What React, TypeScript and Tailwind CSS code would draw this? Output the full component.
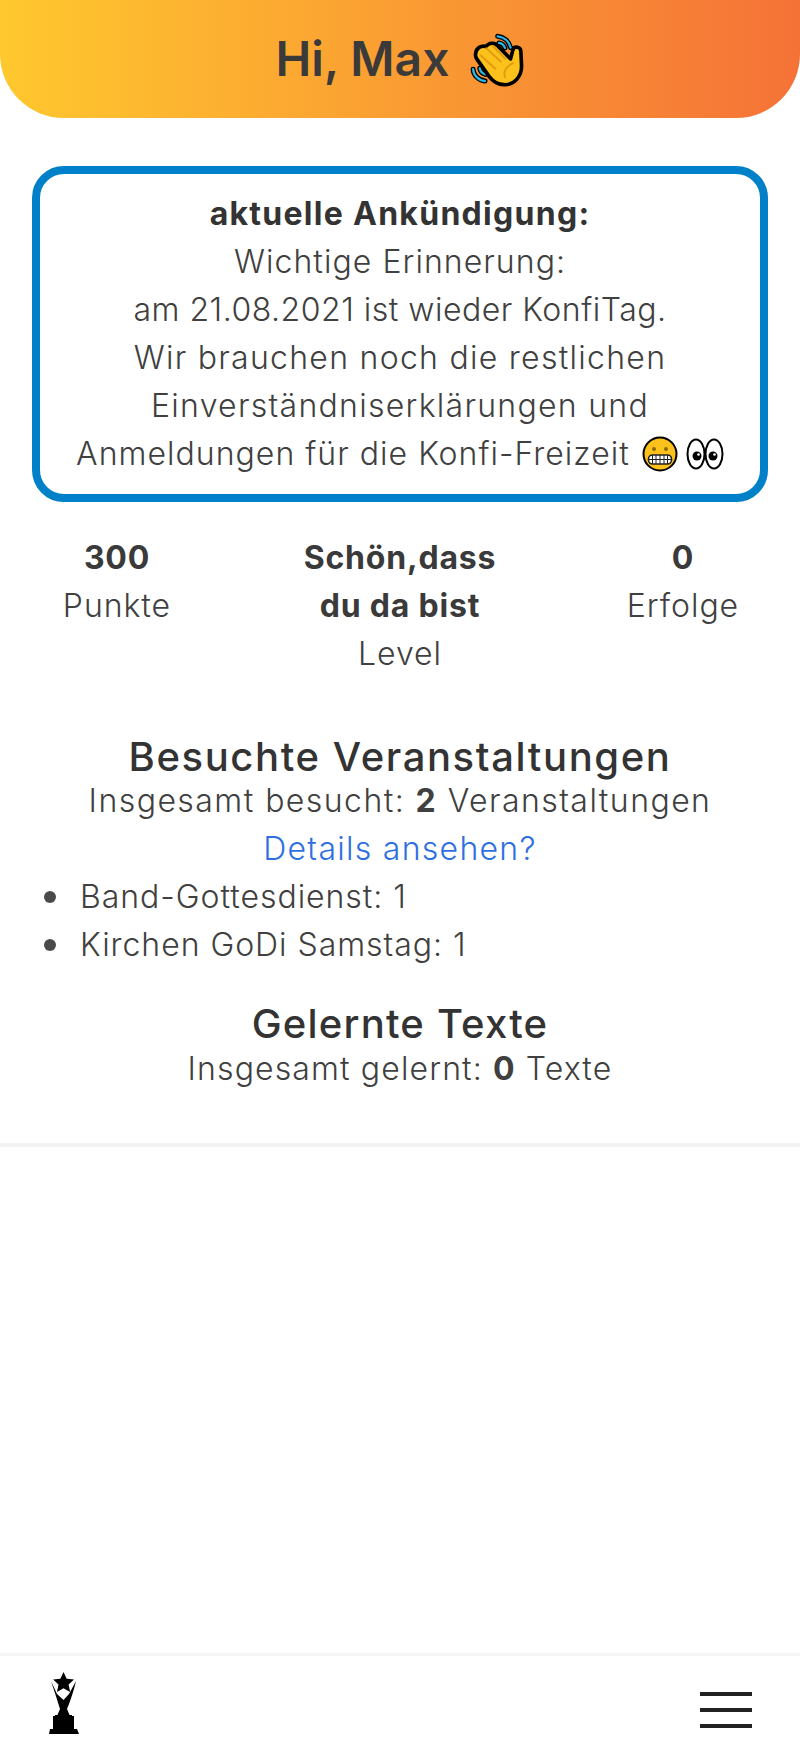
const font = "font-['Inter','Noto_Sans',sans-serif]";

function WaveEmoji() {
  return (
    <svg viewBox="80 28 165 172" className="h-[57px] w-[55px]" fill="none">
      <g strokeLinecap="round">
        <path d="M166 44c18 2 34 14 39 34M170 64c8 1 15 7 18 15" stroke="#000" strokeWidth="15" />
        <path d="M92 143c0 18 16 34 36 36M112 140c1 9 8 16 17 19" stroke="#000" strokeWidth="15" />
        <path d="M166 44c18 2 34 14 39 34M170 64c8 1 15 7 18 15" stroke="#29b6e8" strokeWidth="7" />
        <path d="M92 143c0 18 16 34 36 36M112 140c1 9 8 16 17 19" stroke="#29b6e8" strokeWidth="7" />
      </g>
      <path
        d="M100 95c0-15 18-25 30-20 10-13 28-13 35-3l40 40 7-27c4-13 24-10 24 5l2 40c2 35-23 62-53 60-20 0-35-12-45-25l-35-50c-5-7-7-15-5-20z"
        fill="#fcc21b"
        stroke="#000"
        strokeWidth="11"
        strokeLinejoin="round"
      />
      <path d="M132 80l43 40M115 102l44 40M152 74l38 38M212 125c-16 8-30 22-24 42" stroke="#e29c10" strokeWidth="6" strokeLinecap="round" />
    </svg>
  );
}

function GrimaceEmoji() {
  return (
    <svg viewBox="0 0 36 36" className="h-9 w-9">
      <circle cx="18" cy="18" r="16.500" fill="#fcc21b" stroke="#000" strokeWidth="2" />
      <circle cx="12" cy="13" r="2" fill="#8a6a10" />
      <circle cx="24" cy="13" r="2" fill="#8a6a10" />
      <rect x="6.500" y="19" width="23" height="9" rx="4" fill="#fff" stroke="#222" strokeWidth="1.600" />
      <path d="M7 23.500h22M10.500 19v9M14 19v9M18 19v9M22 19v9M25.500 19v9" stroke="#222" strokeWidth="1" />
    </svg>
  );
}

function EyesEmoji() {
  return (
    <svg viewBox="0 0 38 32" className="h-8 w-[38px]">
      <ellipse cx="10" cy="16" rx="8.500" ry="14.500" fill="#fff" stroke="#000" strokeWidth="2" />
      <ellipse cx="28" cy="16" rx="8.500" ry="14.500" fill="#fff" stroke="#000" strokeWidth="2" />
      <circle cx="11" cy="18" r="4.500" fill="#000" />
      <circle cx="27" cy="18" r="4.500" fill="#000" />
      <circle cx="12.500" cy="16.500" r="1.300" fill="#fff" />
      <circle cx="28.500" cy="16.500" r="1.300" fill="#fff" />
    </svg>
  );
}

function Trophy() {
  return (
    <svg viewBox="0 0 30 62" className="mb-[14px] h-[62px] w-[30px]" fill="#000">
      <path d="M14.500 0l3.200 6.800 7.300.8-5.400 5 1.500 7.400-6.600-3.700L8 20l1.500-7.400-5.400-5 7.300-.8z" />
      <path d="M2 9c3 9 7 21 9 28l-3 7h13l-3-7c3-7 7-19 9-28l-7 13-5.500 6L8 22z" />
      <path d="M4 44h2v-1h17v1h2v13H4z" />
      <path d="M1 57h27l2 5H0z" />
    </svg>
  );
}

function Stat({ lines, label }: { lines: string[]; label: string }) {
  return (
    <div className="text-center">
      {lines.map((line) => (
        <div key={line} className="font-bold tracking-[0.025em] text-[#3a3a3a]">
          {line}
        </div>
      ))}
      <div className="tracking-[0.03em]">{label}</div>
    </div>
  );
}

export default function App() {
  return (
    <div className={`${font} flex min-h-[1764px] flex-col bg-white text-[32px] leading-[48px] font-light tracking-[0.04em] text-[#404040]`}>
      <header className="flex h-[118px] items-center justify-center gap-5 rounded-b-[64px] bg-linear-to-r/srgb from-[#ffc82e] to-[#f57237] tracking-normal">
        <span className="text-[48px] font-semibold text-[#3a3a3a]">Hi, Max</span>
        <WaveEmoji />
      </header>

      <section className="mx-8 mt-12 rounded-[32px] border-8 border-[#0080c8] py-4 text-center">
        <div className="font-bold text-[#333]">aktuelle Ankündigung:</div>
        <div className="tracking-[0.033em]">Wichtige Erinnerung:</div>
        <div className="tracking-[0.016em]">am 21.08.2021 ist wieder KonfiTag.</div>
        <div>Wir brauchen noch die restlichen</div>
        <div>Einverständniserklärungen und</div>
        <div className="flex items-center justify-center">
          <span className="mr-3 tracking-[0.032em]">Anmeldungen für die Konfi-Freizeit</span>
          <GrimaceEmoji />
          <span className="ml-2">
            <EyesEmoji />
          </span>
        </div>
      </section>

      <div className="mx-8 mt-8 grid grid-cols-[170px_1fr_170px]">
        <Stat lines={["300"]} label="Punkte" />
        <Stat lines={["Schön,dass", "du da bist"]} label="Level" />
        <Stat lines={["0"]} label="Erfolge" />
      </div>

      <section className="mt-[59px] text-center">
        <h2 className="text-[40px] leading-[40px] font-medium tracking-[0.04em] text-[#333]">Besuchte Veranstaltungen</h2>
        <div className="tracking-[0.045em]">
          Insgesamt besucht: <b className="font-bold">2</b> Veranstaltungen
        </div>
        <a className="text-[#2f6fe0]">Details ansehen?</a>
        <ul className="pl-11 text-left tracking-[0.03em]">
          <li className="flex items-center gap-6">
            <span className="h-3 w-3 rounded-full bg-[#4a4a4a]" />
            Band-Gottesdienst: 1
          </li>
          <li className="flex items-center gap-6">
            <span className="h-3 w-3 rounded-full bg-[#4a4a4a]" />
            Kirchen GoDi Samstag: 1
          </li>
        </ul>
      </section>

      <section className="mt-[34px] text-center">
        <h2 className="text-[40px] leading-[42px] font-medium tracking-[0.03em] text-[#333]">Gelernte Texte</h2>
        <div className="tracking-[0.035em]">
          Insgesamt gelernt: <b className="font-bold">0</b> Texte
        </div>
      </section>

      <hr className="mt-[50px] border-t-4 border-[#f3f3f3]" />

      <nav className="mt-auto flex h-[111px] items-center justify-between border-t-[3px] border-[#f5f5f5] pr-[48px] pl-[49px]">
        <Trophy />
        <div className="flex w-[52px] flex-col gap-3">
          <span className="h-1 bg-[#222]" />
          <span className="h-1 bg-[#222]" />
          <span className="h-1 bg-[#222]" />
        </div>
      </nav>
    </div>
  );
}
